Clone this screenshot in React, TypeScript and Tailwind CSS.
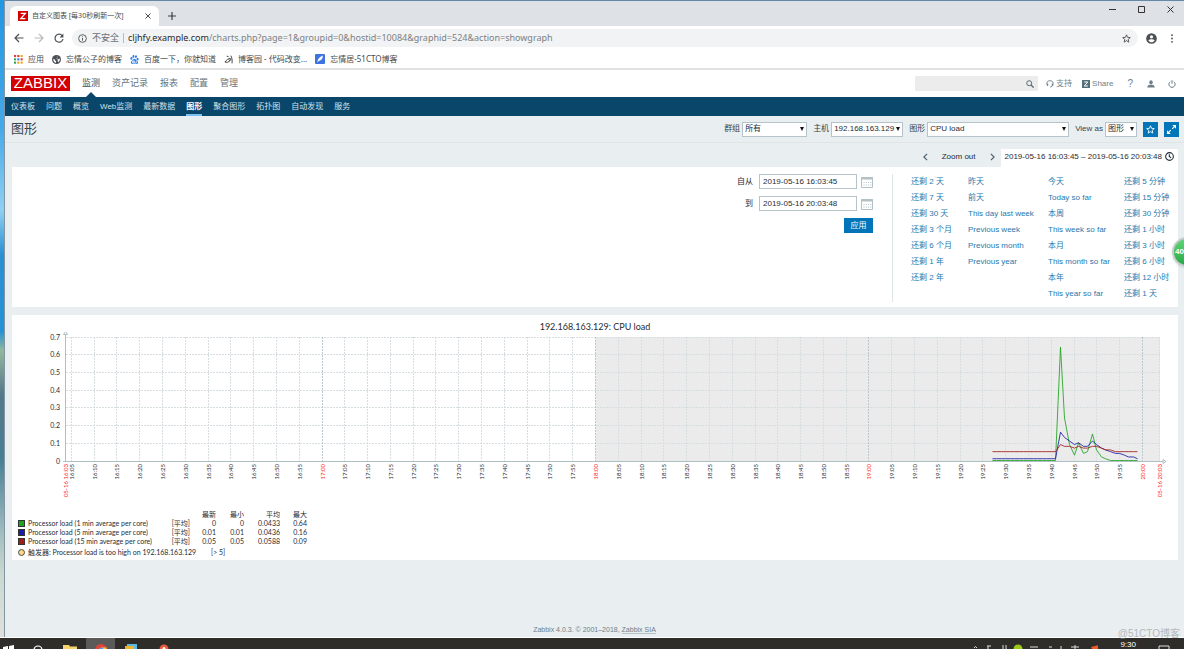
import { useState } from "react";
import type { ReactNode } from "react";
import { SiBaidu } from "react-icons/si";

const TOP_MENU = ["监测", "资产记录", "报表", "配置", "管理"];

const SUB_MENU = [
  "仪表板",
  "问题",
  "概览",
  "Web监测",
  "最新数据",
  "图形",
  "聚合图形",
  "拓扑图",
  "自动发现",
  "服务",
];

const RANGES = [
  ["还剩 2 天", "还剩 7 天", "还剩 30 天", "还剩 3 个月", "还剩 6 个月", "还剩 1 年", "还剩 2 年"],
  ["昨天", "前天", "This day last week", "Previous week", "Previous month", "Previous year"],
  ["今天", "Today so far", "本周", "This week so far", "本月", "This month so far", "本年", "This year so far"],
  ["还剩 5 分钟", "还剩 15 分钟", "还剩 30 分钟", "还剩 1 小时", "还剩 3 小时", "还剩 6 小时", "还剩 12 小时", "还剩 1 天"],
];

const flat = (value: number, count: number) => Array<number>(count).fill(value);

// one value per minute, from 19:27 to 19:59
const SERIES = [
  {
    name: "Processor load (1 min average per core)",
    color: "#1ea31e",
    stats: ["0", "0", "0.0433", "0.64"],
    values: [...flat(0, 15), 0.64, 0.24, 0.09, 0.03, 0.1, 0.04, 0.05, 0.15, 0.06, 0.02, 0.01, ...flat(0, 7)],
  },
  {
    name: "Processor load (5 min average per core)",
    color: "#1c1ca8",
    stats: ["0.01", "0.01", "0.0436", "0.16"],
    values: [
      ...flat(0.01, 15), 0.16, 0.13, 0.11, 0.09, 0.1, 0.08, 0.08, 0.11, 0.09, 0.07, 0.06, 0.05, 0.04, 0.04, 0.03,
      0.02, 0.02, 0.01,
    ],
  },
  {
    name: "Processor load (15 min average per core)",
    color: "#a31c1c",
    stats: ["0.05", "0.05", "0.0588", "0.09"],
    values: [...flat(0.05, 15), 0.09, 0.08, 0.08, 0.07, 0.08, 0.07, 0.07, 0.08, 0.08, 0.07, 0.06, 0.06, ...flat(0.05, 6)],
  },
];

const STAR = "M5 .9l1.2 2.8 3 .3-2.3 2 .7 3L5 7.4 2.4 9l.7-3L.8 4l3-.3z";

function Tab() {
  return (
    <div className="flex h-[25px] items-end bg-[#dee1e6] pl-[5px]">
      <div className="flex h-5 w-[149px] items-center rounded-t-md bg-white px-2">
        <svg viewBox="0 0 10 10" className="size-[10px] shrink-0">
          <rect width="10" height="10" fill="#d40000" />
          <path d="M2.7 2.4h4.6L2.8 7.6h4.6" fill="none" stroke="#fff" strokeWidth="1.3" />
        </svg>
        <span className="ml-1 flex-1 text-[7px] whitespace-nowrap text-[#45494d]">自定义图表 [每30秒刷新一次]</span>
        <button aria-label="Close tab">
          <svg viewBox="0 0 6 6" className="size-[6px]" fill="none" stroke="#45494d">
            <path d="M.5.5l5 5M5.500.5l-5 5" />
          </svg>
        </button>
      </div>
      <button aria-label="New tab" className="mb-[6px] ml-[9px]">
        <svg viewBox="0 0 8 8" className="size-2" fill="none" stroke="#3c4043" strokeWidth="1.2">
          <path d="M4 0v8M0 4h8" />
        </svg>
      </button>
      <div className="mr-[10px] mb-[13px] ml-auto flex items-center gap-[22px] text-[#333]">
        <button aria-label="Minimize">
          <svg viewBox="0 0 7 7" className="size-[7px]" stroke="currentColor">
            <path d="M0 3.5h7" />
          </svg>
        </button>
        <button aria-label="Maximize">
          <svg viewBox="0 0 7 7" className="size-[7px]" fill="none" stroke="currentColor">
            <path d="M.5.5h6v6h-6z" />
          </svg>
        </button>
        <button aria-label="Close">
          <svg viewBox="0 0 7 7" className="size-[7px]" fill="none" stroke="currentColor">
            <path d="M.5.5l6 6M6.5.5l-6 6" />
          </svg>
        </button>
      </div>
    </div>
  );
}

function Toolbar() {
  return (
    <div className="flex h-6 items-center bg-white pr-[10px] pl-[9px] text-[#4c5054]">
      <button aria-label="Back">
        <svg viewBox="0 0 10 10" className="size-[10px]" fill="none" stroke="currentColor" strokeWidth="1.2">
          <path d="M9.5 5h-8M5 1L1 5l4 4" />
        </svg>
      </button>
      <button aria-label="Forward" className="ml-[10px] text-[#b8babd]">
        <svg viewBox="0 0 10 10" className="size-[10px]" fill="none" stroke="currentColor" strokeWidth="1.2">
          <path d="M.5 5h8M5 1l4 4-4 4" />
        </svg>
      </button>
      <button aria-label="Reload" className="ml-[10px]">
        <svg viewBox="0 0 10 10" className="size-[10px]" fill="none" stroke="currentColor" strokeWidth="1.2">
          <path d="M8.3 2.8A4 4 0 1 0 9 6" />
          <path d="M9.4.6v3.8H5.6z" fill="currentColor" stroke="none" />
        </svg>
      </button>
      <div className="ml-2 flex h-[18px] flex-1 items-center rounded-full bg-[#f1f3f4] pr-[7px] pl-[6px]">
        <svg viewBox="0 0 10 10" className="size-[9px]" fill="none" stroke="currentColor">
          <circle cx="5" cy="5" r="4.3" />
          <path d="M5 4.4v3M5 2.5v1" />
        </svg>
        <span className="ml-[5px] text-[9px] text-[#6b6f73]">不安全</span>
        <span className="mx-1 h-[10px] w-px bg-[#b9bcbf]" />
        <span className="flex-1 text-[9px] whitespace-nowrap text-[#7d8185]">
          <span className="text-[#26292c]">cljhfy.example.com</span>
          /charts.php?page=1&amp;groupid=0&amp;hostid=10084&amp;graphid=524&amp;action=showgraph
        </span>
        <button aria-label="Bookmark this page">
          <svg viewBox="0 0 10 10" className="size-[9px]" fill="none" stroke="currentColor">
            <path d={STAR} />
          </svg>
        </button>
      </div>
      <button aria-label="Profile" className="ml-2">
        <svg viewBox="0 0 12 12" className="size-[11px]">
          <circle cx="6" cy="6" r="5.8" fill="#4c5054" />
          <circle cx="6" cy="4.2" r="1.7" fill="#fff" />
          <path d="M2.6 8.2C3.4 7 5 6.8 6 6.8s2.6.2 3.4 1.4C8.6 9.5 7.3 10.1 6 10.1s-2.6-.6-3.4-1.9z" fill="#fff" />
        </svg>
      </button>
      <button aria-label="Menu" className="ml-[13px]">
        <svg viewBox="0 0 4 10" className="h-[9px] w-1" fill="currentColor">
          <circle cx="2" cy="1.3" r="1" />
          <circle cx="2" cy="5" r="1" />
          <circle cx="2" cy="8.7" r="1" />
        </svg>
      </button>
    </div>
  );
}

function Bookmark({ icon, children }: { icon: ReactNode; children: ReactNode }) {
  return (
    <a href="#" className="flex items-center gap-[5px] whitespace-nowrap">
      {icon}
      {children}
    </a>
  );
}

function BookmarkBar() {
  const dots = ["#e33b2e", "#e33b2e", "#f0a51e", "#33a352", "#3b78e7", "#e33b2e", "#33a352", "#f0a51e", "#f0a51e"];

  return (
    <nav className="flex h-5 items-center gap-2 border-b-2 border-[#dfe1e3] bg-white pl-[9px] text-[8px] text-[#45494d]">
      <Bookmark
        icon={
          <svg viewBox="0 0 9 9" className="size-[9px]">
            {dots.map((fill, i) => (
              <rect key={i} x={(i % 3) * 3.3} y={Math.floor(i / 3) * 3.3} width="2.1" height="2.1" fill={fill} />
            ))}
          </svg>
        }
      >
        应用
      </Bookmark>
      <Bookmark
        icon={
          <svg viewBox="0 0 10 10" className="size-[9px]">
            <circle cx="5" cy="5" r="5" fill="#4c5054" />
            <path
              d="M1.4 4.3l2 1 .3 1.2L4.600 7l-.2 1.800C2.400 8.400 1.200 6.600 1.400 4.300zM5.200 1.400l1 .9-1.100 1 .2 1.100 2 .4 1.400-.8c.2 1.800-.5 3.200-1.900 4.100"
              fill="#fff"
            />
          </svg>
        }
      >
        忘情公子的博客
      </Bookmark>
      <Bookmark icon={<SiBaidu className="size-[9px] text-[#2b7de9]" />}>百度一下，你就知道</Bookmark>
      <Bookmark
        icon={
          <svg viewBox="0 0 10 10" className="size-[9px]" fill="none" stroke="#444" strokeWidth="1.1">
            <path d="M3 1.4l2 .2M1 7.8c2-2.4 4-4.1 5.500-4.100 1.400 0 1.300 2 .2 2.400-1 .3-1.700-.8-.9-1.700M7.500.7c1.400 2 1.800 5.300 1.400 8.600M1 7.800l3 .4 3-2" />
          </svg>
        }
      >
        博客园 - 代码改变...
      </Bookmark>
      <Bookmark
        icon={
          <svg viewBox="0 0 10 10" className="size-[10px]">
            <rect width="10" height="10" rx="1" fill="#3f74e0" />
            <path d="M2.3 8.4C2.500 5.500 4.500 2.700 7.800 1.500c.2 2.700-1 5-4.100 5.600z" fill="#fff" />
          </svg>
        }
      >
        忘情居-51CTO博客
      </Bookmark>
    </nav>
  );
}

function Header() {
  return (
    <header>
      <div className="flex h-[27px] items-center bg-white pr-2 pl-[6px]">
        <a href="#" className="flex h-[15px] w-[59px] items-center justify-center bg-[#d40000] text-[15px] text-white">
          ZABBIX
        </a>
        <nav className="ml-3 flex h-full items-center gap-3 text-[9px] text-[#6a7479]">
          {TOP_MENU.map((item, i) => (
            <a
              key={item}
              href="#"
              className={"relative flex h-full items-center" + (i === 0 ? " text-[#3c4c55]" : "")}
            >
              {item}
              {i === 0 && (
                <svg viewBox="0 0 10 5" className="absolute bottom-0 left-1/2 h-[5px] w-[10px] -translate-x-1/2">
                  <path d="M0 5l5-5 5 5z" fill="#0a466a" />
                </svg>
              )}
            </a>
          ))}
        </nav>
        <div className="ml-auto flex items-center text-[8px] text-[#6c7f8a]">
          <div className="flex h-[15px] w-[123px] items-center bg-[#ececec] pr-1">
            <input aria-label="Search" className="w-full min-w-0 flex-1 px-1 outline-none" />
            <button aria-label="Search" className="text-[#5a6b75]">
              <svg viewBox="0 0 8 8" className="size-2" fill="none" stroke="currentColor">
                <circle cx="3.2" cy="3.2" r="2.5" />
                <path d="M5 5l2.600 2.600" strokeWidth="1.3" />
              </svg>
            </button>
          </div>
          <a href="#" className="ml-2 flex items-center gap-[2px]">
            <svg viewBox="0 0 8 8" className="size-2" fill="none" stroke="currentColor">
              <path d="M1.600 5.500C-.3 1.800 2.200.7 4 .7s4.300 1.100 2.400 4.800c-.4.9-1.100 1.500-2.200 1.600" />
              <path d="M1.500 3.700v2M6.500 3.700v2" strokeWidth="1.4" />
            </svg>
            支持
          </a>
          <a href="#" className="ml-[10px] flex items-center gap-[2px]">
            <svg viewBox="0 0 8 8" className="size-2">
              <rect width="8" height="8" fill="#546e7a" />
              <path d="M2.200 2h3.600L2.300 6h3.600" fill="none" stroke="#fff" />
            </svg>
            Share
          </a>
          <a href="#" className="ml-[14px] text-[10px]">
            ?
          </a>
          <a href="#" aria-label="User profile" className="ml-[14px]">
            <svg viewBox="0 0 8 8" className="size-2" fill="currentColor">
              <ellipse cx="4" cy="2.3" rx="1.7" ry="2.1" />
              <path d="M.3 7.600c0-2 1.200-2.400 2.600-2.800h2.200c1.400.4 2.600.8 2.600 2.800z" />
            </svg>
          </a>
          <a href="#" aria-label="Sign out" className="ml-[13px]">
            <svg viewBox="0 0 8 8" className="size-2" fill="none" stroke="currentColor">
              <path d="M2.200 1.700a3.100 3.100 0 1 0 3.600 0M4 .2v3.600" />
            </svg>
          </a>
        </div>
      </div>
      <nav className="flex h-[19px] items-center gap-[11px] bg-[#0a466a] pl-[6px] text-[8px] whitespace-nowrap text-[#d5e0e8]">
        {SUB_MENU.map((item) => (
          <a
            key={item}
            href="#"
            className={
              "flex h-full items-center border-y-2 border-transparent" +
              (item === "图形" ? " border-b-[#7cc0f2] font-bold text-white" : "")
            }
          >
            {item}
          </a>
        ))}
      </nav>
    </header>
  );
}

function Select({ label, value, width }: { label: string; value: string; width: string }) {
  return (
    <label className="flex items-center gap-[2px] whitespace-nowrap">
      {label}
      <span className={"relative flex " + width}>
        <select className="h-[15px] w-full appearance-none border border-[#b5c4ca] bg-white pl-[2px] text-[#1f2c33] outline-none">
          <option>{value}</option>
        </select>
        <svg viewBox="0 0 4 4" className="pointer-events-none absolute top-[5px] right-[3px] size-1">
          <path d="M0 0h4L2 4z" fill="#111" />
        </svg>
      </span>
    </label>
  );
}

function TitleBar() {
  return (
    <div className="flex h-[27px] items-center gap-[6px] border-b border-[#dfe4e7] pr-[5px] pl-[6px] text-[8px] text-[#37454d]">
      <h1 className="mr-auto text-[13px]">图形</h1>
      <Select label="群组" value="所有" width="w-[65px]" />
      <Select label="主机" value="192.168.163.129" width="w-[72px]" />
      <Select label="图形" value="CPU load" width="w-[142px]" />
      <Select label="View as" value="图形" width="w-8" />
      <button aria-label="Add to favourites" className="flex size-[15px] items-center justify-center bg-[#0275b8]">
        <svg viewBox="0 0 10 10" className="size-[9px]" fill="none" stroke="#fff">
          <path d={STAR} />
        </svg>
      </button>
      <button aria-label="Fullscreen" className="flex size-[15px] items-center justify-center bg-[#0275b8]">
        <svg viewBox="0 0 10 10" className="size-[9px]" fill="#fff">
          <path d="M5.800 0H10v4.200zM0 5.800V10h4.200z" />
          <path d="M9 1L5.800 4.200M1 9l3.200-3.200" stroke="#fff" strokeWidth="1.2" />
        </svg>
      </button>
    </div>
  );
}

function DateField({
  id,
  label,
  value,
  onChange,
}: {
  id: string;
  label: string;
  value: string;
  onChange: (v: string) => void;
}) {
  return (
    <div className="flex items-center">
      <label htmlFor={id}>{label}</label>
      <input
        id={id}
        value={value}
        onChange={(e) => onChange(e.target.value)}
        className="ml-[6px] h-[15px] w-[98px] border border-[#b5c4ca] bg-white px-[3px] text-[#1f2c33] outline-none"
      />
      <button aria-label={label + " calendar"} className="ml-1">
        <svg viewBox="0 0 12 12" className="size-3" fill="none" stroke="#b3c0c6">
          <path d="M.5 1.500h11v10H.5z" />
          <path d="M0 2.500h12" strokeWidth="2" />
          <path d="M2.500 6.500h8M2.500 9h8" strokeDasharray="1 1.3" />
        </svg>
      </button>
    </div>
  );
}

function TimeFilter() {
  const [from, setFrom] = useState("2019-05-16 16:03:45");
  const [to, setTo] = useState("2019-05-16 20:03:48");

  return (
    <section className="mt-[6px] mr-[6px] ml-[7px] text-[8px] text-[#1f2c33]">
      <div className="flex h-[18px] justify-end *:pb-[3px]">
        <button aria-label="Back in time">
          <svg viewBox="0 0 6 10" className="h-2 w-[5px]" fill="none" stroke="#4f626d" strokeWidth="1.5">
            <path d="M5 1L1 5l4 4" />
          </svg>
        </button>
        <button className="mx-[14px]">Zoom out</button>
        <button aria-label="Forward in time">
          <svg viewBox="0 0 6 10" className="h-2 w-[5px]" fill="none" stroke="#4f626d" strokeWidth="1.5">
            <path d="M1 1l4 4-4 4" />
          </svg>
        </button>
        <button className="ml-[6px] flex items-center gap-[3px] bg-white px-1 whitespace-nowrap">
          {from} – {to}
          <svg viewBox="0 0 10 10" className="size-[9px]" fill="none" stroke="#1f2c33" strokeWidth="1.2">
            <circle cx="5" cy="5" r="4.3" />
            <path d="M4.800 2.400V5l2 1.500" />
          </svg>
        </button>
      </div>
      <div className="flex justify-end bg-white pt-[7px] pb-[5px]">
        <form className="mr-[19px] flex flex-col items-end gap-[7px]" onSubmit={(e) => e.preventDefault()}>
          <DateField id="from" label="自从" value={from} onChange={setFrom} />
          <DateField id="to" label="到" value={to} onChange={setTo} />
          <button className="h-[15px] w-[29px] bg-[#0275b8] text-white">应用</button>
        </form>
        <div className="grid grid-cols-[57px_80px_76px_54px] border-l border-[#dfe4e7] pl-[18px] leading-4 whitespace-nowrap text-[#1f78ae]">
          {RANGES.map((column, i) => (
            <ul key={i}>
              {column.map((range) => (
                <li key={range}>
                  <a href="#">{range}</a>
                </li>
              ))}
            </ul>
          ))}
        </div>
      </div>
    </section>
  );
}

const LEFT = 54;
const RIGHT = 1148;
const TOP = 5;
const BOTTOM = 129;

// minutes since midnight -> x
const timeX = (minute: number) => Math.round(309.5 + (minute - 17 * 60) * 4.558) + 0.5;
const valueY = (value: number) => BOTTOM - 0.5 - (value / 0.7) * (BOTTOM - TOP);

function Chart() {
  const ticks: number[] = [];
  for (let m = 16 * 60 + 5; m <= 20 * 60; m += 5) {
    ticks.push(m);
  }

  return (
    <svg viewBox="0 0 1166 170" className="w-full font-['Lato','Noto_Sans_CJK_SC',sans-serif] text-[7px]">
      <rect x={timeX(18 * 60)} y={TOP} width={RIGHT - timeX(18 * 60)} height={BOTTOM - TOP} fill="#ebebeb" />
      <g stroke="#d6dee1" strokeDasharray="2 1">
        {[1, 2, 3, 4, 5, 6, 7].map((i) => {
          const y = Math.round(valueY(i / 10)) + 0.5;
          return <path key={i} d={`M${LEFT} ${y}H${RIGHT}`} />;
        })}
        {ticks.map((m) => (
          <path key={m} d={`M${timeX(m)} ${TOP}V${BOTTOM}`} stroke={m % 60 === 0 ? "#bcc8cd" : undefined} />
        ))}
        <path d={`M${RIGHT - 0.5} ${TOP}V${BOTTOM}`} />
      </g>
      <g stroke="#b0bec5" fill="#fff">
        <path d={`M${LEFT - 0.5} 2V${BOTTOM + 1}M${LEFT - 3} ${BOTTOM + 0.5}H${RIGHT + 3}`} />
        <path d={`M${LEFT - 2.5} 2.500l2-3 2 3z`} />
        <path d={`M${RIGHT + 3} ${BOTTOM - 1.5}l3 2-3 2z`} />
      </g>
      {SERIES.map((s) => (
        <polyline
          key={s.name}
          points={s.values.map((v, i) => `${timeX(19 * 60 + 27 + i)},${valueY(v)}`).join(" ")}
          fill="none"
          stroke={s.color}
          strokeOpacity="0.85"
        />
      ))}
      <g fill="#1f2c33" textAnchor="end">
        {[0, 0.1, 0.2, 0.3, 0.4, 0.5, 0.6, 0.7].map((v) => (
          <text key={v} x="48" y={valueY(v) + 3}>
            {v}
          </text>
        ))}
      </g>
      <g fill="#1f2c33" textAnchor="end" className="text-[6px]">
        {ticks.map((m) => (
          <text
            key={m}
            transform={`translate(${timeX(m) + 2} 132) rotate(-90)`}
            fill={m % 60 === 0 ? "#f22" : undefined}
          >
            {Math.floor(m / 60)}:{String(m % 60).padStart(2, "0")}
          </text>
        ))}
        <text transform={`translate(${LEFT + 2} 132) rotate(-90)`} fill="#f22">
          05-16 16:03
        </text>
        <text transform={`translate(${RIGHT + 2} 132) rotate(-90)`} fill="#f22">
          05-16 20:03
        </text>
      </g>
    </svg>
  );
}

function GraphPanel() {
  return (
    <section className="mt-2 mr-[6px] ml-[7px] bg-white pt-[7px] pb-[3px] font-['Lato','Noto_Sans_CJK_SC',sans-serif] text-[7px] text-[#1f2c33]">
      <h2 className="text-center text-[9px] leading-[10px]">192.168.163.129: CPU load</h2>
      <Chart />
      <div className="mt-2 px-[6px]">
        <table className="leading-[9px]">
          <thead>
            <tr className="text-right">
              <td className="w-[152px]" />
              <td className="w-5" />
              <th className="w-[26px] font-normal">最新</th>
              <th className="w-[28px] font-normal">最小</th>
              <th className="w-9 font-normal">平均</th>
              <th className="w-[27px] font-normal">最大</th>
            </tr>
          </thead>
          <tbody>
            {SERIES.map((s) => (
              <tr key={s.name} className="text-right">
                <td>
                  <span className="flex items-center gap-[3px] whitespace-nowrap">
                    <span className="size-[7px] border border-[#333]" style={{ background: s.color }} />
                    {s.name}
                  </span>
                </td>
                <td className="whitespace-nowrap">[平均]</td>
                {s.stats.map((value, i) => (
                  <td key={i}>{value}</td>
                ))}
              </tr>
            ))}
          </tbody>
        </table>
        <p className="mt-px flex items-center gap-[3px] leading-[10px]">
          <svg viewBox="0 0 8 8" className="size-[7px]">
            <circle cx="4" cy="4" r="3.4" fill="#ffd98a" stroke="#333" />
          </svg>
          触发器: Processor load is too high on 192.168.163.129
          <span className="ml-3">[&gt; 5]</span>
        </p>
      </div>
    </section>
  );
}

function Taskbar() {
  return (
    <div className="relative flex h-[12px] items-start overflow-hidden border-t border-white bg-[#2e2d2a] text-white">
      <svg viewBox="0 0 180 11" className="h-[11px] w-[180px] shrink-0">
        <path d="M3 9l5-1v4H3zM9 8l5-1v5H9z" fill="#fff" />
        <circle cx="38" cy="12" r="4" fill="none" stroke="#fff" strokeWidth="1.2" />
        <path d="M63 7h6l1 1.500h7V11H63z" fill="#f7d36b" />
        <path d="M86 0h29v11H86z" fill="#5b5a58" />
        <circle cx="101" cy="12" r="6" fill="#e0453a" />
        <path d="M95.200 10.500a6 6 0 0 0 0 3h5z" fill="#3ba55a" />
        <path d="M101 9.500h5.500V12h-5.500z" fill="#f6c83e" />
        <circle cx="101" cy="12" r="2.5" fill="#5b8fe6" />
        <path d="M127 6h10v5h-10z" fill="#5fb9de" />
        <path d="M125 8h9v3h-9z" fill="#efb32c" />
        <circle cx="164" cy="11" r="4.5" fill="#ea5a3d" />
        <circle cx="164" cy="10.5" r="1.5" fill="#fff" />
      </svg>
      <svg viewBox="0 0 130 11" className="ml-auto h-[11px] w-[130px] shrink-0" fill="none" stroke="#ddd">
        <path d="M6 10l1.500-1.500L9 10M19 8h4M20 8v3M35 7v4M38 7v4M62 9h8M81 9h3M93 8v3M107 7v4M103 9h8" />
        <circle cx="50" cy="11" r="4.5" fill="#9bc816" stroke="none" />
        <path d="M123 9l8-2v4h-7z" fill="#f05a28" stroke="none" />
      </svg>
      <time className="ml-[22px] text-[8px] leading-[14px]">9:30</time>
      <svg viewBox="0 0 12 11" className="mr-[14px] ml-[22px] h-[11px] w-3 shrink-0" fill="none" stroke="#ddd">
        <path d="M1 12V8h10v4" />
      </svg>
    </div>
  );
}

export default function App() {
  return (
    <div className="relative flex min-h-screen flex-col overflow-hidden bg-[#e9eef1] font-['Liberation_Sans','Noto_Sans_CJK_SC',sans-serif]">
      <div className="flex flex-1">
        <div className="w-[5px] shrink-0 border-r border-[#8295a0] bg-[linear-gradient(to_bottom,#2196e3_0%,#45a9e8_20%,#8fd0f2_33%,#2a8fd3_40%,#2492d6_52%,#92b79b_55%,#55788a_62%,#467f96_72%,#a4bfc0_84%,#c9d8d0_90%,#e0e0dc_100%)]" />
        <div className="flex min-w-0 flex-1 flex-col border-t border-[#6488a6]">
          <div className="font-['Noto_Sans','Noto_Sans_CJK_SC',sans-serif]">
            <Tab />
            <Toolbar />
            <BookmarkBar />
          </div>
          <Header />
          <TitleBar />
          <TimeFilter />
          <GraphPanel />
          <footer className="mt-auto pb-px text-center text-[7px] leading-3 text-[#6c7f8a]">
            Zabbix 4.0.3. © 2001–2018,{" "}
            <a href="#" className="border-b border-[#b8c3c9]">
              Zabbix SIA
            </a>
          </footer>
        </div>
      </div>
      <Taskbar />
      <button className="absolute top-[237px] -right-[18px] flex size-[30px] items-center rounded-full border-2 border-[#c3ccc7] bg-linear-to-b from-[#5fd67a] to-[#22a845] pl-px text-[8px] font-bold text-white shadow">
        40
      </button>
      <span className="pointer-events-none absolute right-1 bottom-[9px] text-[10px] leading-3 text-[#9a9fa3]/70">
        @51CTO博客
      </span>
    </div>
  );
}
